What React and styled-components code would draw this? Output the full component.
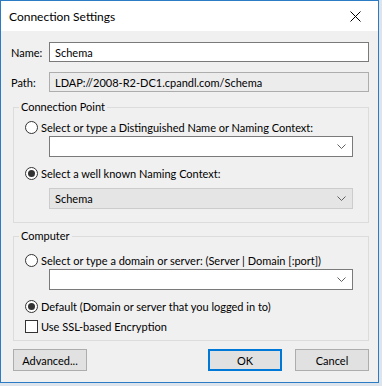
import styled, { createGlobalStyle } from 'styled-components';

const Global = createGlobalStyle`
  html, body {
    margin: 0;
    padding: 0;
    background: #dde4ec;
  }
  body {
    font-family: Lato, "Noto Sans", sans-serif;
    font-size: 11px;
    color: #000;
  }
`;

const Window = styled.div`
  width: 377px;
  height: 381px;
  border: 1px solid #2b7cc4;
  background: #f0f0f0;
  display: flex;
  flex-direction: column;
`;

const TitleBar = styled.div`
  height: 30px;
  background: #fff;
  display: flex;
  align-items: center;
  padding-left: 8px;
  font-size: 12px;
`;

const Title = styled.span`
  flex: 1;
`;

const Close = styled.span`
  width: 46px;
  height: 30px;
  display: flex;
  align-items: center;
  justify-content: center;
`;

const Body = styled.div`
  flex: 1;
  display: flex;
  flex-direction: column;
  padding: 11px 9px 8px 10px;
`;

const FieldRow = styled.div`
  display: flex;
  align-items: center;
  margin-top: ${(p) => p.$top || 0}px;
`;

const Label = styled.span`
  width: 38px;
`;

const TextBox = styled.div`
  flex: 1;
  height: 20px;
  box-sizing: border-box;
  border: 1px solid ${(p) => (p.$readOnly ? '#adadad' : '#7a7a7a')};
  background: ${(p) => (p.$readOnly ? '#ececec' : '#fff')};
  padding: 0 0 0 5px;
  display: flex;
  align-items: center;
`;

const Group = styled.fieldset`
  margin: ${(p) => p.$top}px 0 0 2px;
  padding: 0 0 ${(p) => p.$bottom}px 0;
  border: 1px solid #dcdcdc;
  display: flex;
  flex-direction: column;
`;

const Legend = styled.legend`
  margin-left: 5px;
  padding: 0 2px;
  line-height: 14px;
`;

const OptionRow = styled.label`
  display: flex;
  align-items: center;
  height: 16px;
  margin-top: ${(p) => p.$top}px;
  padding-left: 11px;
  gap: 3px;
  white-space: nowrap;
`;

const Radio = styled.span`
  width: 13px;
  height: 13px;
  box-sizing: border-box;
  border: 1px solid #333;
  border-radius: 50%;
  background: #fff;
  display: flex;
  align-items: center;
  justify-content: center;
  &::after {
    content: '';
    width: 7px;
    height: 7px;
    border-radius: 50%;
    background: ${(p) => (p.$checked ? '#333' : 'transparent')};
  }
`;

const Check = styled.span`
  width: 13px;
  height: 13px;
  box-sizing: border-box;
  border: 1px solid #333;
  background: #fff;
`;

const Combo = styled.div`
  height: 21px;
  box-sizing: border-box;
  margin: ${(p) => p.$top}px 15px 0 35px;
  border: 1px solid ${(p) => (p.$disabled ? '#cccccc' : '#7a7a7a')};
  background: ${(p) => (p.$disabled ? '#e5e5e5' : '#fff')};
  display: flex;
  align-items: center;
  padding: 0 6px 0 5px;
`;

const ComboText = styled.span`
  flex: 1;
`;

const ButtonRow = styled.div`
  display: flex;
  margin-top: 8px;
  padding-left: 2px;
`;

const Button = styled.div`
  width: 74px;
  height: 22px;
  box-sizing: border-box;
  border: ${(p) => (p.$default ? '2px solid #0078d7' : '1px solid #adadad')};
  background: #e1e1e1;
  display: flex;
  align-items: center;
  justify-content: center;
  margin-left: ${(p) => p.$left || 0}px;
`;

function Chevron() {
  return (
    <svg width="9" height="5" viewBox="0 0 9 5">
      <path d="M0.5 0.5 L4.5 4.5 L8.5 0.5" fill="none" stroke="#606060" strokeWidth="1" />
    </svg>
  );
}

export default function App() {
  return (
    <>
      <Global />
      <Window>
        <TitleBar>
          <Title>Connection Settings</Title>
          <Close>
            <svg width="11" height="11" viewBox="0 0 11 11">
              <path d="M0.5 0.5 L10.5 10.5 M10.5 0.5 L0.5 10.5" stroke="#000" strokeWidth="1" />
            </svg>
          </Close>
        </TitleBar>
        <Body>
          <FieldRow>
            <Label>Name:</Label>
            <TextBox>Schema</TextBox>
          </FieldRow>
          <FieldRow $top={10}>
            <Label>Path:</Label>
            <TextBox $readOnly>LDAP://2008-R2-DC1.cpandl.com/Schema</TextBox>
          </FieldRow>

          <Group $top={8} $bottom={13}>
            <Legend>Connection Point</Legend>
            <OptionRow $top={5}>
              <Radio />
              Select or type a Distinguished Name or Naming Context:
            </OptionRow>
            <Combo $top={1}>
              <ComboText />
              <Chevron />
            </Combo>
            <OptionRow $top={8}>
              <Radio $checked />
              Select a well known Naming Context:
            </OptionRow>
            <Combo $top={7} $disabled>
              <ComboText>Schema</ComboText>
              <Chevron />
            </Combo>
          </Group>

          <Group $top={6} $bottom={6}>
            <Legend>Computer</Legend>
            <OptionRow $top={9}>
              <Radio />
              Select or type a domain or server: (Server | Domain [:port])
            </OptionRow>
            <Combo $top={1}>
              <ComboText />
              <Chevron />
            </Combo>
            <OptionRow $top={8}>
              <Radio $checked />
              Default (Domain or server that you logged in to)
            </OptionRow>
            <OptionRow $top={4}>
              <Check />
              Use SSL-based Encryption
            </OptionRow>
          </Group>

          <ButtonRow>
            <Button>Advanced...</Button>
            <Button $default $left={121}>OK</Button>
            <Button $left={13}>Cancel</Button>
          </ButtonRow>
        </Body>
      </Window>
    </>
  );
}
